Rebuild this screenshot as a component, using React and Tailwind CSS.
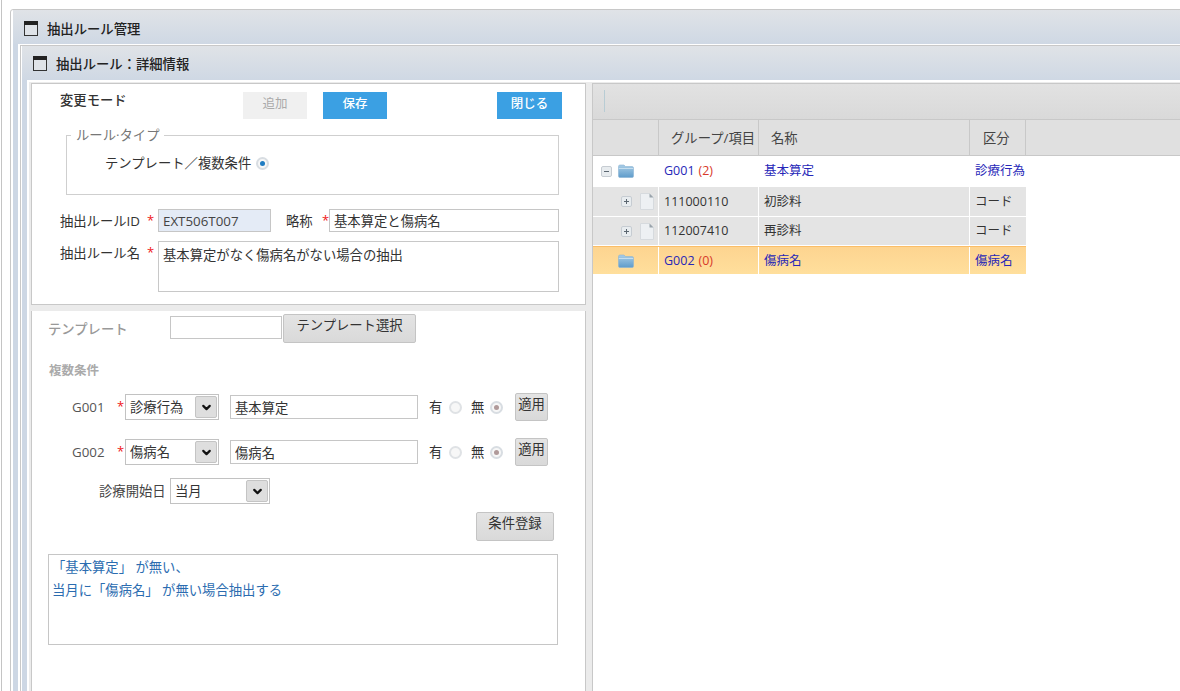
import React from "react";
import { ChevronDown } from "lucide-react";

const WinIcon = () => (
  <svg width="14" height="15" viewBox="0 0 14 15" className="shrink-0">
    <rect x="0.5" y="0.5" width="13" height="14" fill="#dfe3e8" stroke="#333" />
    <rect x="0" y="0" width="14" height="4" fill="#222" />
  </svg>
);

const Folder = () => (
  <svg width="16" height="14" viewBox="0 0 16 14" className="shrink-0">
    <defs>
      <linearGradient id="fg" x1="0" y1="0" x2="0" y2="1">
        <stop offset="0" stopColor="#a9cde6" />
        <stop offset="1" stopColor="#5f9ccb" />
      </linearGradient>
    </defs>
    <path d="M0.5 2.5 Q0.5 1 2 1 H6 L7.5 2.5 H14 Q15.5 2.5 15.5 4 V12 Q15.5 13.5 14 13.5 H2 Q0.5 13.5 0.5 12 Z" fill="url(#fg)" stroke="#8ab4d4" strokeWidth="0.6" />
    <path d="M0.8 4.5 H15.2" stroke="#d3e6f3" strokeWidth="0.8" />
  </svg>
);

const Doc = () => (
  <svg width="14" height="17" viewBox="0 0 14 17" className="shrink-0">
    <path d="M0.5 0.5 H9.5 L13.5 4.5 V16.5 H0.5 Z" fill="#edf0f3" stroke="#d6dade" />
    <path d="M9.5 0.5 V4.5 H13.5 Z" fill="#9aa3ab" />
  </svg>
);

const Toggle = ({ plus }) => (
  <svg width="11" height="11" viewBox="0 0 11 11" className="shrink-0">
    <rect x="0.5" y="0.5" width="10" height="10" rx="1.5" fill="#e8ecef" stroke="#c6ccd2" />
    <path d={plus ? "M3 5.5 H8 M5.5 3 V8" : "M3 5.5 H8"} stroke="#5b6670" strokeWidth="1" />
  </svg>
);

const Radio = ({ checked, dot = "#1f7cc2" }) => (
  <span className={`flex h-[13px] w-[13px] shrink-0 items-center justify-center rounded-full border-2 ${checked ? "border-[#d8dde2]" : "border-[#dfe2e5]"} bg-[#f7f7f7]`}>
    {checked && <span className="h-[5px] w-[5px] rounded-full" style={{ backgroundColor: dot }} />}
  </span>
);

const Star = ({ className = "" }) => <span className={`text-[13px] leading-none text-[#f01818] ${className}`}>*</span>;

const GrayBtn = ({ children, className = "" }) => (
  <button className={`rounded-[2px] border border-[#c4c4c4] bg-gradient-to-b from-[#e4e4e4] to-[#d9d9d9] pb-[5px] leading-none text-[#333] ${className}`}>{children}</button>
);

const Select = ({ value, className = "" }) => (
  <div className={`flex items-center border border-[#c2c2c2] bg-white ${className}`}>
    <span className="ml-[4px] flex-1 text-[#333]">{value}</span>
    <span className="mr-[1px] flex h-[22px] w-[22px] items-center justify-center rounded-[2px] border border-[#c4c4c4] bg-[#dedede]">
      <ChevronDown size={13} strokeWidth={4} color="#111" />
    </span>
  </div>
);

const Input = ({ value = "", className = "" }) => (
  <input readOnly value={value} className={`border border-[#c6c6c6] bg-white px-[4px] text-[#333] outline-none ${className}`} />
);

const GroupRow = ({ label, value, star = true }) => (
  <div className="flex h-[28px] items-center">
    <span className="ml-[40px] w-[45px] text-[#555]">{label}</span>
    <Star className="-mt-[2px] w-[8px]" />
    <Select value={value.sel} className="h-[26px] w-[94px]" />
    <Input value={value.text} className="ml-[11px] h-[24px] w-[188px]" />
    <span className="ml-[11px] w-[20px] text-[#333]">有</span>
    <Radio />
    <span className="ml-[9px] w-[19px] text-[#333]">無</span>
    <Radio checked dot="#b09a9a" />
    <GrayBtn className="ml-[12px] h-[28px] w-[33px]">適用</GrayBtn>
  </div>
);

const cols = ["w-[66px]", "w-[100px]", "w-[211px]", "w-[56px]"];

const TreeRow = ({ rowClass, first, id, count, name, kind, link }) => {
  const text = link ? "text-[#2727b8]" : "text-[#333]";
  return (
    <div className={`flex w-[433px] ${rowClass}`}>
      <div className={`flex ${cols[0]} shrink-0 items-center border-r border-white`}>{first}</div>
      <div className={`flex ${cols[1]} shrink-0 items-center border-r border-white pl-[5px] text-[12.5px] ${text}`}>
        {id}
        {count && <span className="ml-[4px] text-[#d83a2a]">{count}</span>}
      </div>
      <div className={`flex ${cols[2]} shrink-0 items-center border-r border-white pl-[5px] text-[12.5px] ${text}`}>{name}</div>
      <div className={`flex flex-1 items-center pl-[5px] text-[12.5px] whitespace-nowrap ${text}`}>{kind}</div>
    </div>
  );
};

export default function App() {
  return (
    <div className="h-[691px] w-[1180px] overflow-hidden bg-white text-[13.33px] leading-[20px] text-[#333] [font-family:'Open_Sans','Noto_Sans_CJK_JP',sans-serif]">
      <div className="ml-[1px] h-[800px] border-l border-[#c4c4c4] pl-[8px] pt-[9px]">
        <div className="h-[790px] w-[1300px] rounded-tl-[3px] border border-[#c8c8c8] bg-white pl-[2px]">
          <div className="flex h-full flex-col bg-[#cdd7e4]">
            <div className="flex h-[34px] shrink-0 items-center gap-[9px] bg-gradient-to-b from-[#e0e3e7] to-[#cfd8e4] pl-[11px] pt-[3px]">
              <WinIcon />
              <span className="font-medium text-[#222]">抽出ルール管理</span>
            </div>
            <div className="ml-[5px] flex-1 bg-white pl-[2px] pt-[1px]">
              <div className="flex h-full flex-col border border-[#c8c8c8] bg-white pl-[1px]">
                <div className="flex h-full flex-col bg-[#cdd7e4]">
                  <div className="flex h-[34px] shrink-0 items-center gap-[9px] bg-gradient-to-b from-[#e0e3e7] to-[#cfd8e4] pl-[11px] pt-[1px]">
                    <WinIcon />
                    <span className="font-medium text-[#222]">抽出ルール：詳細情報</span>
                  </div>
                  <div className="ml-[5px] flex-1 bg-white pl-[2px] pt-[2px]">
                    <div className="flex h-full bg-[#ebebeb] pl-[2px] pt-[1px]">
                      {/* left column */}
                      <div className="flex w-[555px] shrink-0 flex-col">
                        <div className="h-[222px] shrink-0 border border-[#c8c8c8] bg-white">
                          <div className="mt-[8px] flex h-[27px] pl-[28px]">
                            <span className="w-[183px] leading-[16px] text-[#333] font-medium">変更モード</span>
                            <button className="w-[64px] bg-[#f0f0f0] pb-[4px] text-[12.5px] text-[#aaa]">追加</button>
                            <button className="ml-[16px] w-[64px] bg-[#3ba0e3] pb-[4px] text-[12.5px] font-medium text-white">保存</button>
                            <button className="ml-[110px] w-[65px] bg-[#3ba0e3] pb-[4px] text-[12.5px] font-medium text-white">閉じる</button>
                          </div>
                          <fieldset className="ml-[34px] mt-[6px] h-[70px] w-[493px] border border-[#cfcfcf] pl-[38px]">
                            <legend className="-ml-[34px] px-[5px] text-[#777]">ルール·タイプ</legend>
                            <div className="mt-[8px] flex items-center gap-[5px] text-[#333]">
                              <span>テンプレート／複数条件</span>
                              <Radio checked />
                            </div>
                          </fieldset>
                          <div className="mt-[14px] flex h-[23px] items-center">
                            <span className="w-[108px] text-right text-[#333]">抽出ルールID</span>
                            <Star className="ml-[7px] w-[11px]" />
                            <Input value="EXT506T007" className="h-[23px] w-[113px] !bg-[#e4ebf6] !text-[#444]" />
                            <span className="ml-[15px] w-[36px] text-[#333]">略称</span>
                            <Star className="w-[7px]" />
                            <Input value="基本算定と傷病名" className="ml-[0px] h-[23px] w-[230px]" />
                          </div>
                          <div className="mt-[9px] flex">
                            <span className="mt-[2px] w-[108px] text-right text-[#333]">抽出ルール名</span>
                            <Star className="ml-[7px] mt-[5px] w-[11px]" />
                            <textarea readOnly value="基本算定がなく傷病名がない場合の抽出" className="h-[51px] w-[401px] resize-none border border-[#c8c8c8] px-[4px] py-[3px] text-[#333] outline-none" />
                          </div>
                        </div>
                        <div className="h-[6px] shrink-0" />
                        <div className="flex-1 border-x border-[#c8c8c8] bg-white">
                          <div className="mt-[3px] flex items-start">
                            <span className="ml-[16px] mt-[5px] w-[122px] font-medium text-[#999]">テンプレート</span>
                            <Input className="mt-[2px] h-[23px] w-[112px]" />
                            <GrayBtn className="ml-[1px] h-[29px] w-[133px]">テンプレート選択</GrayBtn>
                          </div>
                          <div className="ml-[17px] mt-[18px] text-[12.5px] font-bold text-[#aaa]">複数条件</div>
                          <div className="mt-[12px]"><GroupRow label="G001" value={{ sel: "診療行為", text: "基本算定" }} /></div>
                          <div className="mt-[17px]"><GroupRow label="G002" value={{ sel: "傷病名", text: "傷病名" }} /></div>
                          <div className="mt-[12px] flex h-[26px] items-center">
                            <span className="ml-[67px] w-[71px] text-[#444]">診療開始日</span>
                            <Select value="当月" className="h-[26px] w-[100px]" />
                          </div>
                          <div className="mt-[8px] flex justify-start">
                            <GrayBtn className="ml-[444px] h-[29px] w-[78px]">条件登録</GrayBtn>
                          </div>
                          <div className="ml-[16px] mt-[13px] h-[91px] w-[510px] border border-[#c6c6c6] px-[3px] pt-[1px] text-[#2b6cb0] leading-[23px]">
                            <div>「基本算定」 が無い、</div>
                            <div>当月に「傷病名」 が無い場合抽出する</div>
                          </div>
                        </div>
                      </div>
                      {/* right column */}
                      <div className="ml-[6px] flex-1 border-l border-t border-[#c8c8c8] bg-white">
                        <div className="flex h-[35px] items-center bg-gradient-to-b from-[#e2e2e2] to-[#d9d9d9] pl-[11px]">
                          <span className="mb-[1px] h-[22px] w-[1px] bg-[#b8ccd4]" />
                        </div>
                        <div className="flex h-[37px] border-y border-[#c8c8c8] bg-[#e0e0e0] text-[#444]">
                          <div className={`${cols[0]} border-r border-[#c8c8c8]`} />
                          <div className={`flex ${cols[1]} items-center whitespace-nowrap border-r border-[#c8c8c8] pl-[12px]`}>グループ/項目</div>
                          <div className={`flex ${cols[2]} items-center border-r border-[#c8c8c8] pl-[12px]`}>名称</div>
                          <div className={`flex ${cols[3]} items-center border-r border-[#c8c8c8] pl-[13px]`}>区分</div>
                        </div>
                        <TreeRow rowClass="h-[30px] bg-white" link id="G001" count="(2)" name="基本算定" kind="診療行為"
                          first={<div className="ml-[8px] flex items-center gap-[6px]"><Toggle /><Folder /></div>} />
                        <TreeRow rowClass="mt-[1px] h-[29px] bg-[#e4e4e4]" id="111000110" name="初診料" kind="コード"
                          first={<div className="ml-[28px] flex items-center gap-[8px]"><Toggle plus /><Doc /></div>} />
                        <TreeRow rowClass="mt-[1px] h-[28px] bg-[#e4e4e4]" id="112007410" name="再診料" kind="コード"
                          first={<div className="ml-[28px] flex items-center gap-[8px]"><Toggle plus /><Doc /></div>} />
                        <TreeRow rowClass="mt-[1px] h-[28px] border-t border-[#fbbe68] bg-gradient-to-b from-[#fdd490] to-[#ffdf9c]" link id="G002" count="(0)" name="傷病名" kind="傷病名"
                          first={<div className="ml-[25px] flex items-center"><Folder /></div>} />
                      </div>
                    </div>
                  </div>
                </div>
              </div>
            </div>
          </div>
        </div>
      </div>
    </div>
  );
}
